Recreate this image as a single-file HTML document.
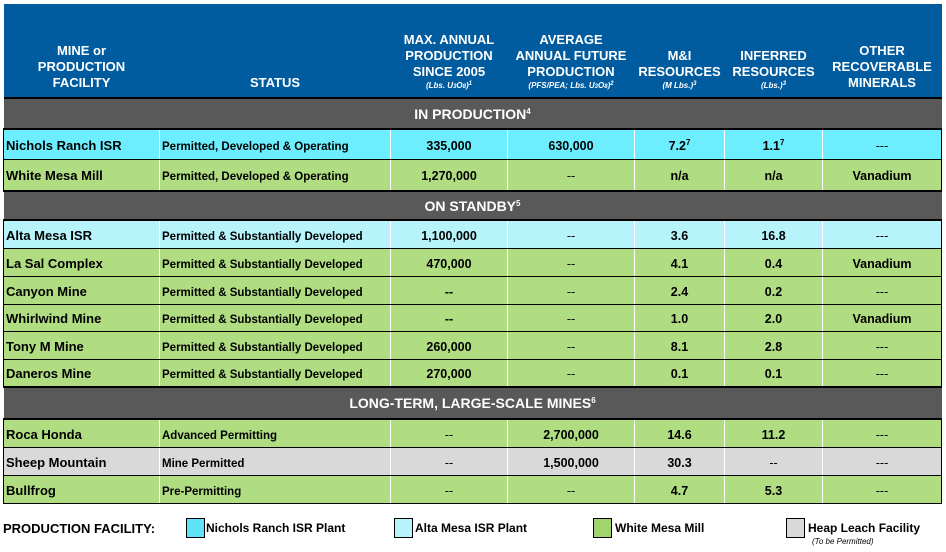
<!DOCTYPE html>
<html><head><style>
body{margin:0;width:946px;height:552px;background:#fff;font-family:"Liberation Sans",Arial,sans-serif;position:relative;overflow:hidden}
table{position:absolute;left:3px;top:4px;border-collapse:collapse;table-layout:fixed;width:938px}
td,th{padding:0;font-weight:bold;color:#000;overflow:hidden;white-space:nowrap}
th{background:#005b9f;color:#fff;font-size:13px;line-height:16px;vertical-align:bottom;text-align:center;padding-bottom:6px;border:none}
th i{font-size:8px;font-weight:bold;display:block;line-height:11px}
th i sup{font-size:6px;vertical-align:top;line-height:8px}
th i sub{font-size:6px;vertical-align:bottom;line-height:8px}
tr.sec td{background:#595959;color:#fff;text-align:center;font-size:14px;border-top:2px solid #000;border-bottom:2px solid #000;vertical-align:middle}
tr.r td{border-left:1px solid #fff;border-bottom:1px solid #000;text-align:center;font-size:12.5px;vertical-align:middle;padding-top:3px;line-height:16px}
tr.r td:first-child{text-align:left;padding-left:2px;font-size:13px;border-left:1px solid #000}
tr.r td:nth-child(2){text-align:left;padding-left:2px;font-size:11.5px;padding-top:5px}
tr.r td:last-child{border-right:1px solid #000}
.c td{background:#6ceefe}.l td{background:#b7f3fb}.g td{background:#b0dc82}.y td{background:#d9d9d9}
sup{font-size:8px;vertical-align:5px;line-height:0}
.d{font-weight:normal;font-size:11px}
.leg{position:absolute;top:521px;font-size:12px;font-weight:bold}
.box{position:absolute;top:518px;width:17px;height:18px;border:1px solid #000}
</style></head><body>
<table>
<colgroup><col style="width:156px"><col style="width:231px"><col style="width:117px"><col style="width:127px"><col style="width:90px"><col style="width:98px"><col style="width:119px"></colgroup>
<tr style="height:94px"><th>MINE or<br>PRODUCTION<br>FACILITY</th><th>STATUS</th><th>MAX. ANNUAL<br>PRODUCTION<br>SINCE 2005<i>(Lbs. U<sub>3</sub>O<sub>8</sub>)<sup>1</sup></i></th><th>AVERAGE<br>ANNUAL FUTURE<br>PRODUCTION<i>(PFS/PEA; Lbs. U<sub>3</sub>O<sub>8</sub>)<sup>2</sup></i></th><th>M&amp;I<br>RESOURCES<i>(M Lbs.)<sup>3</sup></i></th><th>INFERRED<br>RESOURCES<i>(Lbs.)<sup>3</sup></i></th><th>OTHER<br>RECOVERABLE<br>MINERALS</th></tr>
<tr class="sec" style="height:31px"><td colspan="7">IN PRODUCTION<sup>4</sup></td></tr>
<tr class="r c" style="height:30px"><td>Nichols Ranch ISR</td><td>Permitted, Developed &amp; Operating</td><td>335,000</td><td>630,000</td><td>7.2<sup>7</sup></td><td>1.1<sup>7</sup></td><td class="d">---</td></tr>
<tr class="r g" style="height:32px"><td>White Mesa Mill</td><td>Permitted, Developed &amp; Operating</td><td>1,270,000</td><td class="d">--</td><td>n/a</td><td>n/a</td><td>Vanadium</td></tr>
<tr class="sec" style="height:29px"><td colspan="7">ON STANDBY<sup>5</sup></td></tr>
<tr class="r l" style="height:28px"><td>Alta Mesa ISR</td><td>Permitted &amp; Substantially Developed</td><td>1,100,000</td><td class="d">--</td><td>3.6</td><td>16.8</td><td class="d">---</td></tr>
<tr class="r g" style="height:28px"><td>La Sal Complex</td><td>Permitted &amp; Substantially Developed</td><td>470,000</td><td class="d">--</td><td>4.1</td><td>0.4</td><td>Vanadium</td></tr>
<tr class="r g" style="height:28px"><td>Canyon Mine</td><td>Permitted &amp; Substantially Developed</td><td>--</td><td class="d">--</td><td>2.4</td><td>0.2</td><td class="d">---</td></tr>
<tr class="r g" style="height:27px"><td>Whirlwind Mine</td><td>Permitted &amp; Substantially Developed</td><td>--</td><td class="d">--</td><td>1.0</td><td>2.0</td><td>Vanadium</td></tr>
<tr class="r g" style="height:28px"><td>Tony M Mine</td><td>Permitted &amp; Substantially Developed</td><td>260,000</td><td class="d">--</td><td>8.1</td><td>2.8</td><td class="d">---</td></tr>
<tr class="r g" style="height:28px"><td>Daneros Mine</td><td>Permitted &amp; Substantially Developed</td><td>270,000</td><td class="d">--</td><td>0.1</td><td>0.1</td><td class="d">---</td></tr>
<tr class="sec" style="height:32px"><td colspan="7">LONG-TERM, LARGE-SCALE MINES<sup>6</sup></td></tr>
<tr class="r g" style="height:28px"><td>Roca Honda</td><td>Advanced Permitting</td><td class="d">--</td><td>2,700,000</td><td>14.6</td><td>11.2</td><td class="d">---</td></tr>
<tr class="r y" style="height:28px"><td>Sheep Mountain</td><td>Mine Permitted</td><td class="d">--</td><td>1,500,000</td><td>30.3</td><td class="d">--</td><td class="d">---</td></tr>
<tr class="r g" style="height:28px"><td>Bullfrog</td><td>Pre-Permitting</td><td class="d">--</td><td class="d">--</td><td>4.7</td><td>5.3</td><td class="d">---</td></tr>
</table>
<div class="leg" style="left:3px;font-size:13px">PRODUCTION FACILITY:</div>
<div class="box" style="left:186px;background:#5ee3f8"></div><div class="leg" style="left:206px">Nichols Ranch ISR Plant</div>
<div class="box" style="left:394px;background:#b7f3fb"></div><div class="leg" style="left:415px">Alta Mesa ISR Plant</div>
<div class="box" style="left:593px;background:#9fd46e"></div><div class="leg" style="left:615px">White Mesa Mill</div>
<div class="box" style="left:786px;background:#d9d9d9"></div><div class="leg" style="left:808px">Heap Leach Facility</div>
<div style="position:absolute;left:812px;top:537px;font-size:8px;font-style:italic">(To be Permitted)</div>
</body></html>
